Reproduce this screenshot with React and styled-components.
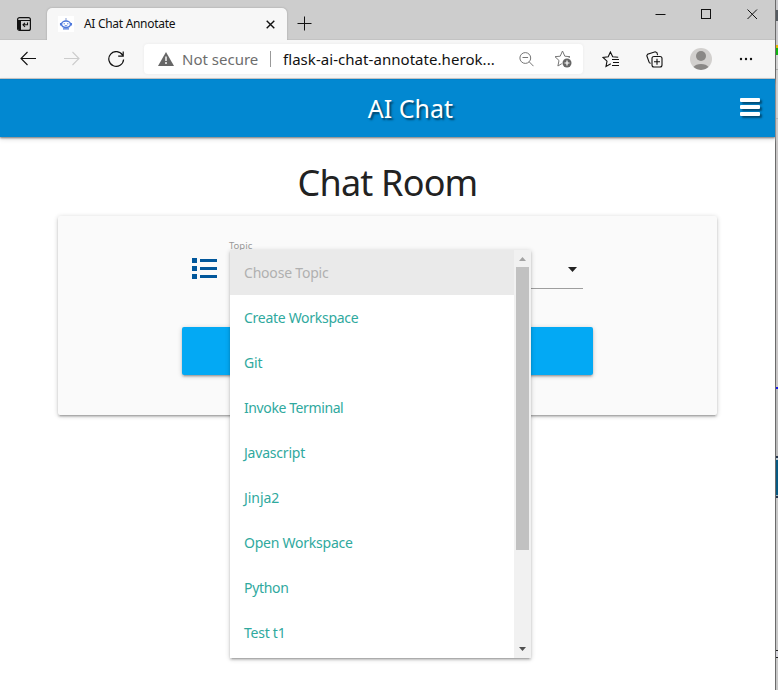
import React from "react";
import styled, { createGlobalStyle } from "styled-components";

const GlobalStyle = createGlobalStyle`
  * { box-sizing: border-box; }
  body { margin: 0; background: #fff; font-family: "Noto Sans", "Open Sans", sans-serif; overflow: hidden; }
  svg { display: block; flex: none; }
`;

const Screen = styled.div`
  display: flex;
  width: 778px;
  height: 690px;
  overflow: hidden;
`;
const BrowserWindow = styled.div`
  width: 775px;
  flex: none;
  display: flex;
  flex-direction: column;
`;
const Desktop = styled.div`
  width: 3px;
  height: 690px;
  flex: none;
  border-left: 1px solid #6b6b6b;
  background: linear-gradient(
    #c9c9cc 0 10px, #555b61 10px 21px, #c9c9cc 21px 45px, #e5b700 45px 48px,
    #10b510 48px 55px, #d2d2d2 55px 69px, #aaa 69px 70px, #cfcfcf 70px 118px,
    #aaa 118px 119px, #c9c7c7 119px 387px, #1717e8 387px 389px, #bbb 389px 456px,
    #26354d 456px 458px, #b8cad3 458px 460px, #075a83 460px 495px,
    #9db4c0 495px 496px, #26354d 496px 498px, #c9c9c9 498px 650px,
    #222 650px 651px, #d5d5dc 651px 657px, #222 657px 658px, #c9c9c9 658px
  );
`;

const TitleBar = styled.div`
  height: 40px;
  flex: none;
  display: flex;
  background: #cdcdcd;
  border-bottom: 1px solid #c3c3c3;
`;
const TabActions = styled.div`
  width: 47px;
  padding: 17px 0 0 17px;
`;
const Tab = styled.div`
  width: 240px;
  height: 32px;
  margin-top: 8px;
  padding: 0 12px 0 11px;
  display: flex;
  align-items: center;
  position: relative;
  background: #f7f7f7;
  border-radius: 5px 5px 0 0;
  box-shadow: 0 0 2px #999;
  clip-path: inset(-3px -3px 0 -3px);
`;
const Favicon = styled.div`
  width: 16px;
  height: 16px;
  background: #fff;
`;
const TabTitle = styled.div`
  flex: 1;
  margin-left: 10px;
  font-size: 12px;
  line-height: 16px;
  letter-spacing: -0.3px;
  color: #111;
  white-space: nowrap;
`;
const NewTab = styled.div`
  padding: 16px 0 0 10px;
  flex: 1;
`;
const WindowControls = styled.div`
  display: flex;
  gap: 35px;
  padding: 9px 17px 0 0;
`;

const Toolbar = styled.div`
  height: 39px;
  flex: none;
  display: flex;
  align-items: center;
  background: #f7f7f7;
  border-bottom: 1px solid #c7c7c7;
`;
const Navigation = styled.div`
  display: flex;
  align-items: center;
  gap: 28px;
  width: 144px;
  padding-left: 20px;
`;
const AddressBar = styled.div`
  width: 439px;
  height: 30px;
  display: flex;
  align-items: center;
  padding: 0 11px 0 14px;
  background: #fff;
  border-radius: 4px;
  box-shadow: 0 0 3px #e9e9e9;
  font-size: 15px;
  line-height: 20px;
  white-space: nowrap;
`;
const Security = styled.span`
  width: 89px;
  margin-left: 8px;
  padding-right: 8px;
  border-right: 1px solid #999;
  color: #6d6d6d;
  line-height: 16px;
`;
const Address = styled.span`
  flex: 1;
  margin-left: 12px;
  color: #111;
  letter-spacing: 0.05px;
`;
const AddressActions = styled.div`
  display: flex;
  align-items: center;
  gap: 20px;
`;
const BrowserActions = styled.div`
  display: flex;
  align-items: center;
  gap: 27px;
  margin-left: 19px;
`;

const AppBar = styled.header`
  height: 58px;
  flex: none;
  display: grid;
  grid-template-columns: 1fr auto 1fr;
  align-items: center;
  padding: 0 15px;
  position: relative;
  border-top: 1px solid #0380c8;
  background: #0288d1;
  box-shadow: 0 1px 2px #777, 0 2px 5px #ddd;
  color: #fff;
`;
const Brand = styled.div`
  grid-column: 2;
  font-size: 25px;
  line-height: 34px;
  margin-left: 46px;
  padding-bottom: 2px;
  text-shadow: 2px 2px 2px rgba(0, 0, 0, 0.5);
`;
const MenuIcon = styled.div`
  justify-self: end;
  width: 20px;
  height: 18px;
  margin-top: -3px;
  display: flex;
  flex-direction: column;
  justify-content: space-between;
`;
const MenuLine = styled.span`
  height: 4px;
  background: #fff;
  border-radius: 1px;
  box-shadow: 2px 2px 2px rgba(0, 0, 0, 0.45);
`;

const Main = styled.main`
  flex: 1;
  padding: 21px 58px 0;
  background: #fff;
`;
const Heading = styled.h1`
  margin: 0;
  height: 58px;
  font-size: 36px;
  font-weight: 400;
  line-height: 50px;
  letter-spacing: -0.8px;
  text-align: center;
  color: #222;
`;
const Card = styled.section`
  height: 199px;
  padding: 28px 124px 0;
  background: #fafafa;
  border-radius: 2px;
  box-shadow: 0 2px 2px rgba(0,0,0,.14), 0 3px 1px -2px rgba(0,0,0,.12), 0 1px 5px rgba(0,0,0,.2);
`;
const FieldRow = styled.div`
  display: flex;
  height: 83px;
  padding-left: 10px;
`;
const ListIcon = styled.div`
  width: 38px;
  padding-top: 14px;
`;
const Select = styled.div`
  width: 353px;
  height: 45px;
  position: relative;
  display: flex;
  justify-content: space-between;
  border-bottom: 1px solid #9e9e9e;
`;
const Label = styled.label`
  margin-top: -5px;
  margin-left: -1px;
  font-size: 9.5px;
  line-height: 13px;
  color: #999;
`;
const Caret = styled.span`
  width: 9px;
  height: 5px;
  margin: 23px 6px 0 0;
  background: #222;
  clip-path: polygon(0 0, 100% 0, 50% 100%);
`;
const Dropdown = styled.div`
  position: absolute;
  z-index: 1;
  left: 0;
  top: 6px;
  width: 301px;
  height: 408px;
  display: flex;
  background: #fff;
  box-shadow: 0 2px 2px rgba(0,0,0,.14), 0 3px 1px -2px rgba(0,0,0,.12), 0 1px 5px rgba(0,0,0,.2);
`;
const Options = styled.ul`
  flex: 1;
  height: 408px;
  margin: 0;
  padding: 0;
  overflow: hidden;
  list-style: none;
`;
const Option = styled.li`
  height: 45px;
  padding-left: 14px;
  font-size: 14px;
  line-height: 46px;
  letter-spacing: ${({ $spacing }) => $spacing}px;
  color: ${({ $disabled }) => ($disabled ? "#b0b0b0" : "#2fa99e")};
  background: ${({ $disabled }) => ($disabled ? "#eaeaea" : "#fff")};
`;
const Scrollbar = styled.div`
  width: 17px;
  display: flex;
  flex-direction: column;
  align-items: center;
  background: #f1f1f1;
`;
const ScrollArrow = styled.span`
  width: 7px;
  height: 4px;
  margin: ${({ $down }) => ($down ? "auto 0 7px" : "7px 0 6px")};
  background: ${({ $down }) => ($down ? "#505050" : "#a3a3a3")};
  clip-path: ${({ $down }) => ($down ? "polygon(0 0, 100% 0, 50% 100%)" : "polygon(0 100%, 50% 0, 100% 100%)")};
`;
const ScrollThumb = styled.div`
  width: 13px;
  height: 283px;
  background: #c1c1c1;
`;
const SubmitButton = styled.button`
  display: block;
  width: 411px;
  height: 48px;
  padding: 0;
  border: 0;
  border-radius: 2px;
  background: #03a9f4;
  box-shadow: 0 2px 2px rgba(0,0,0,.14), 0 3px 1px -2px rgba(0,0,0,.12), 0 1px 5px rgba(0,0,0,.2);
`;

const star = "M8.5 1 L10.8 6.2 L16 6.7 L12.1 10.5 L13.1 16 L8.5 13.2 L3.9 16 L5 10.5 L1 6.7 L6.2 6.2 Z";
const options = [
  ["Choose Topic", -0.2],
  ["Create Workspace", -0.29],
  ["Git", -0.1],
  ["Invoke Terminal", -0.4],
  ["Javascript", -0.2],
  ["Jinja2", -0.05],
  ["Open Workspace", -0.24],
  ["Python", -0.3],
  ["Test t1", -0.25],
];

function BrowserTabs() {
  return (
    <TitleBar>
      <TabActions>
        <svg width="14" height="14" viewBox="0 0 14 14" fill="none" stroke="#111">
          <rect x=".6" y=".6" width="12.8" height="12.8" rx="2" strokeWidth="1.2" />
          <path d="M1 3h12v1H4v9H2L1 12z" fill="#111" stroke="none" />
          <path d="M10.5 5.5v2.2H6M8 5.8 6 7.8l2 2" strokeWidth="1.1" />
        </svg>
      </TabActions>
      <Tab>
        <Favicon>
          <svg width="16" height="16" viewBox="0 0 16 16" fill="none" stroke="#4f79dc">
            <path d="M8 5V2" stroke="#a8b8df" strokeWidth="1.4" />
            <ellipse cx="8" cy="8.3" rx="4.5" ry="3.2" strokeWidth="1.5" />
            <path d="M2.6 7v2.5M13.4 7v2.5M5 12.8h6" strokeWidth="1.3" />
            <path d="M6.2 7v1.4M9.8 7v1.4M6.8 9.5q1.2.7 2.4 0" strokeWidth=".9" />
          </svg>
        </Favicon>
        <TabTitle>AI Chat Annotate</TabTitle>
        <svg width="9" height="9" viewBox="0 0 9 9" stroke="#111" strokeWidth="1.4">
          <path d="m.7.7 7.6 7.6m0-7.6L.7 8.3" />
        </svg>
      </Tab>
      <NewTab>
        <svg width="15" height="15" viewBox="0 0 15 15" stroke="#111"><path d="M.5 7.5h14M7.5.5v14" /></svg>
      </NewTab>
      <WindowControls>
        <svg width="11" height="11" stroke="#111"><path d="M.5 5.5h10" /></svg>
        <svg width="11" height="11" fill="none" stroke="#111"><rect x=".5" y=".5" width="9" height="9" /></svg>
        <svg width="11" height="11" stroke="#111"><path d="m.5.5 9.5 9.5m0-9.5L.5 10" /></svg>
      </WindowControls>
    </TitleBar>
  );
}

function BrowserToolbar() {
  return (
    <Toolbar>
      <Navigation>
        <svg width="16" height="16" fill="none" stroke="#111" strokeWidth="1.1"><path d="M16 7.5H1M7.5 1 1 7.5 7.5 14" /></svg>
        <svg width="16" height="16" fill="none" stroke="#ccc" strokeWidth="1.1"><path d="M0 7.5h15M8.5 1 15 7.5 8.5 14" /></svg>
        <svg width="17" height="17" fill="none" stroke="#111" strokeWidth="1.2"><path d="M14.6 4.2A7.4 7.4 0 1 0 15.6 8.5M15.2.5v4.6h-5" /></svg>
      </Navigation>
      <AddressBar>
        <svg width="16" height="14" viewBox="0 0 16 14"><path d="M8 0 16 14H0Z" fill="#666" /><path d="M8 4.5V9M8 10v2" stroke="#fff" strokeWidth="1.4" /></svg>
        <Security>Not secure</Security>
        <Address>flask-ai-chat-annotate.herok...</Address>
        <AddressActions>
          <svg width="15" height="15" fill="none" stroke="#767676"><circle cx="6.3" cy="6" r="5.4" /><path d="M3.5 5.5h5.6M10.2 9.8l4.3 4.4" /></svg>
          <svg width="18" height="18" fill="none" stroke="#767676"><path d={star} /><circle cx="12.8" cy="12.8" r="5.2" fill="#fff" stroke="none" /><circle cx="13" cy="13" r="4.5" fill="#666" stroke="none" /><path d="M10.5 13h5M13 10.5v5" stroke="#fff" strokeWidth="1.2" /></svg>
        </AddressActions>
      </AddressBar>
      <BrowserActions>
        <svg width="17" height="17" viewBox="0 0 17 17" fill="none" stroke="#111"><path d="M8.8 12.8 4 15.4l1-5.3L1 6.5l5.2-.8L8.4 1l2.3 4.7 5.5.5M10 8.5h7M11 11.5h6M10 14.5h7" strokeWidth="1.1" /></svg>
        <svg width="17" height="17" fill="none" stroke="#111" strokeWidth="1.1"><path d="m4.5 12.5-1.4-1.2L.8 4.8l.8-1.5L9.2.8l1.7.8.7 2.5" /><rect x="6" y="5.5" width="10" height="10.5" rx="2" fill="#f7f7f7" /><path d="M8 10.7h6M11 7.7v6" /></svg>
        <svg width="22" height="22"><circle cx="11" cy="11" r="11" fill="#d2d0ce" /><circle cx="11" cy="8" r="5" fill="#8a8886" /><path d="M3.5 19a8.3 5.4 0 0 1 15 0A11 11 0 0 1 3.5 19" fill="#8a8886" /></svg>
        <svg width="14" height="4" fill="#111"><circle cx="2" cy="2" r="1.2" /><circle cx="7" cy="2" r="1.2" /><circle cx="12" cy="2" r="1.2" /></svg>
      </BrowserActions>
    </Toolbar>
  );
}

export default function App() {
  return (
    <>
      <GlobalStyle />
      <Screen>
        <BrowserWindow>
          <BrowserTabs />
          <BrowserToolbar />
          <AppBar>
            <Brand>AI Chat</Brand>
            <MenuIcon><MenuLine /><MenuLine /><MenuLine /></MenuIcon>
          </AppBar>
          <Main>
            <Heading>Chat Room</Heading>
            <Card>
              <FieldRow>
                <ListIcon>
                  <svg width="25" height="21" fill="#01579b"><path d="M0 0h5v5H0zM0 8h5v5H0zM0 16h5v5H0zM8 1h17v3H8zM8 9h17v3H8zM8 17h17v3H8z" /></svg>
                </ListIcon>
                <Select>
                  <Label>Topic</Label>
                  <Caret />
                  <Dropdown>
                    <Options>
                      {options.map(([name, spacing], index) => (
                        <Option key={name} $disabled={index === 0} $spacing={spacing}>{name}</Option>
                      ))}
                    </Options>
                    <Scrollbar><ScrollArrow /><ScrollThumb /><ScrollArrow $down /></Scrollbar>
                  </Dropdown>
                </Select>
              </FieldRow>
              <SubmitButton />
            </Card>
          </Main>
        </BrowserWindow>
        <Desktop />
      </Screen>
    </>
  );
}
